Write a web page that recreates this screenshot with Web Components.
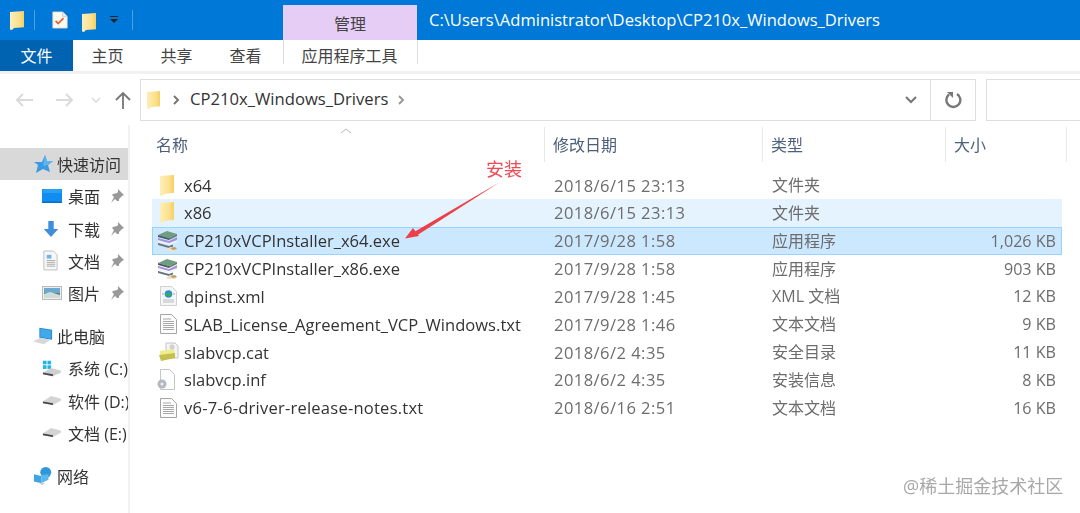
<!DOCTYPE html>
<html lang="zh"><head><meta charset="utf-8"><title>CP210x_Windows_Drivers</title>
<style>
html,body{margin:0;padding:0;background:#fff;overflow:hidden}
body{width:1080px;height:513px;font-family:"Open Sans","Noto Sans CJK SC",sans-serif}
</style></head><body>
<x-explorer>
  <x-titlebar slot="title" path="C:\Users\Administrator\Desktop\CP210x_Windows_Drivers"></x-titlebar>
  <x-ribbon slot="ribbon"></x-ribbon>
  <x-address slot="address" folder="CP210x_Windows_Drivers"></x-address>
  <x-nav slot="nav">
    <x-nav-item icon="star" level="0" selected>快速访问</x-nav-item>
    <x-nav-item icon="desktop" level="1" pin>桌面</x-nav-item>
    <x-nav-item icon="down" level="1" pin>下载</x-nav-item>
    <x-nav-item icon="docs" level="1" pin>文档</x-nav-item>
    <x-nav-item icon="pics" level="1" pin>图片</x-nav-item>
    <x-nav-item icon="pc" level="0" gap="10.8">此电脑</x-nav-item>
    <x-nav-item icon="sysdrive" level="1">系统 (C:)</x-nav-item>
    <x-nav-item icon="drive" level="1">软件 (D:)</x-nav-item>
    <x-nav-item icon="drive" level="1">文档 (E:)</x-nav-item>
    <x-nav-item icon="net" level="0" gap="10.8">网络</x-nav-item>
  </x-nav>
  <x-files slot="files">
    <x-file icon="folder" date="2018/6/15 23:13" type="文件夹">x64</x-file>
    <x-file icon="folder" date="2018/6/15 23:13" type="文件夹" state="hover">x86</x-file>
    <x-file icon="exe" date="2017/9/28 1:58" type="应用程序" size="1,026 KB" state="selected">CP210xVCPInstaller_x64.exe</x-file>
    <x-file icon="exe" date="2017/9/28 1:58" type="应用程序" size="903 KB">CP210xVCPInstaller_x86.exe</x-file>
    <x-file icon="xml" date="2017/9/28 1:45" type="XML 文档" size="12 KB">dpinst.xml</x-file>
    <x-file icon="txt" date="2017/9/28 1:46" type="文本文档" size="9 KB" ls=".03">SLAB_License_Agreement_VCP_Windows.txt</x-file>
    <x-file icon="cat" date="2018/6/2 4:35" type="安全目录" size="11 KB">slabvcp.cat</x-file>
    <x-file icon="inf" date="2018/6/2 4:35" type="安装信息" size="8 KB">slabvcp.inf</x-file>
    <x-file icon="txt" date="2018/6/16 2:51" type="文本文档" size="16 KB" ls=".23">v6-7-6-driver-release-notes.txt</x-file>
  </x-files>
  <x-callout slot="overlay"></x-callout>
</x-explorer>
<script>
const ICONS={
folder:'<svg viewBox="0 0 14 20" preserveAspectRatio="none"><defs><linearGradient id="f" x1="0" x2="1" y1="0" y2="0"><stop offset="0" stop-color="#fdeeb8"/><stop offset=".65" stop-color="#fbe08e"/><stop offset="1" stop-color="#f4cf63"/></linearGradient></defs><path d="M0 1l14-1v17L4 18l-2 2-2-.500z" fill="url(#f)"/></svg>',
doc:'<svg viewBox="0 0 18 20"><path d="M1 1h11l5 5v13H1z" fill="#fdfaf2" stroke="#e2dccb"/><path d="M12 1v5h5" fill="#eee" stroke="#ccc"/><path d="M4 11l3 3 6-6" fill="none" stroke="#e0672e" stroke-width="2"/></svg>',
star:'<svg viewBox="0 0 20 20"><path d="M12 1l2 6h6l-5 4 2 7-7-3-7 4 2-8-4-3h8z" fill="#3b9ae1"/><path d="M12 1l2 6h6l-5 4-5 1z" fill="#5cb4f0"/></svg>',
desktop:'<svg viewBox="0 0 20 16"><rect x="0" y="1" width="20" height="14" fill="#0f8df0"/><rect x="0" y="13.500" width="20" height="1.500" fill="#0a6fc4"/><rect x="1" y="1" width="18" height="4" fill="#2a9ff5"/></svg>',
down:'<svg viewBox="0 0 20 20"><path d="M7 1h6v9h5l-8 9-8-9h5z" fill="#3d8fdc"/></svg>',
docs:'<svg viewBox="0 0 18 22"><path d="M2 1h10l4 4v16H2z" fill="#f7f7f7" stroke="#bdbdbd"/><path d="M5 5h5v4H5z" fill="#6fb6e6"/><path d="M5 11h9M5 13h9M5 15h9M5 17h9" stroke="#a9a9a9"/></svg>',
pics:'<svg viewBox="0 0 20 16"><rect x=".5" y="1.500" width="19" height="13" fill="#eee" stroke="#bbb"/><rect x="2" y="3" width="16" height="5" fill="#6ca8cf"/><rect x="2" y="8" width="16" height="5" fill="#56806e"/><path d="M2 9l6-2 10 3v3H2z" fill="#cfdcd8"/></svg>',
pin:'<svg viewBox="0 0 14 14"><path d="M8 0l6 6-2 1-3 3 0 2-2 0-2-2-4 4 3-6-2-2 1-1 4-1 1-1z" fill="#999"/></svg>',
pc:'<svg viewBox="0 0 22 20"><path d="M7 1l14 2v11l-14-2z" fill="#2288d4"/><path d="M8 2l12 2v9l-12-2z" fill="#41a9ea"/><path d="M0 16l8-4 11 2-7 5z" fill="#d8d8d8"/></svg>',
sysdrive:'<svg viewBox="0 0 22 20"><rect x="1" y="2" width="4" height="4" fill="#22b5e8"/><rect x="6" y="2" width="4" height="4" fill="#22b5e8"/><rect x="1" y="7" width="4" height="4" fill="#22b5e8"/><rect x="6" y="7" width="4" height="4" fill="#22b5e8"/><path d="M1 15l9-5 11 3v2l-9 4-11-2z" fill="#cfcfcf"/><path d="M1 15l11 2v2l-11-2z" fill="#4c4c4c"/></svg>',
drive:'<svg viewBox="0 0 22 14"><path d="M1 8l9-6 11 3v2l-9 5-11-2z" fill="#d4d4d4"/><path d="M1 8l11 2v2l-11-2z" fill="#454545"/></svg>',
net:'<svg viewBox="0 0 22 22"><circle cx="14" cy="7" r="6" fill="#2f97d9"/><path d="M1 9l8 2v8l-8-2z" fill="#3da5e6"/><path d="M9 10l8-1v6l-8 4z" fill="#5bb8ee"/><path d="M5 18l8 1-3 2z" fill="#c9c9c9"/></svg>',
exe:'<svg viewBox="0 0 22 21"><path d="M1 5l9-4 10 3-8 4z" fill="#6f9c82"/><path d="M1 5l11 3v2L1 7z" fill="#4a5a6a"/><path d="M12 8l8-4v2l-8 4z" fill="#5a8068"/><path d="M1 8l11 3 8-4v3l-8 3L1 10z" fill="#a493dc"/><path d="M1 10.500l11 3 8-3v1.500l-8 3-11-3z" fill="#f4f3f8"/><path d="M1 13l11 3 4-1.500v2L12 18 1 15z" fill="#6a747e"/><path d="M9 20l4-3 7 2-2 2-7 0z" fill="#efe2c4"/><path d="M13 18l5-1 2 2-4 1z" fill="#b89d68"/></svg>',
xml:'<svg viewBox="0 0 17 20"><path d="M.5.5h11l5 5v14H.5z" fill="#f4f6f8" stroke="#d0d0d0"/><path d="M3 14h11M3 16h11" stroke="#bbb"/><circle cx="8.500" cy="8" r="3.800" fill="#2d8fcf"/><path d="M5.500 9l3-3 3 3-3 2z" fill="#3caa55"/><path d="M2 8h2M13 8h2" stroke="#aaa"/></svg>',
txt:'<svg viewBox="0 0 17 20"><path d="M.5.5h11l5 5v14H.5z" fill="#fcfcfc" stroke="#a5a5a5"/><path d="M3 5h8M3 7.500h11M3 9.500h11M3 11.500h11M3 13.500h11M3 15.500h11" stroke="#a8a8a8"/></svg>',
cat:'<svg viewBox="0 0 20 20"><path d="M7 1h9l3 3v12H7z" fill="#f4f4f4" stroke="#c4c4c4"/><path d="M1 9l14-2 1 5-15 3z" fill="#f0ec90"/><path d="M0 13l16-2v5L2 19z" fill="#c5bf4e"/><circle cx="13" cy="5" r="2.500" fill="#cfcfcf"/></svg>',
inf:'<svg viewBox="0 0 18 21"><path d="M3.500.5h9l5 5v15h-14z" fill="#fdfdfd" stroke="#c4c4c4"/><circle cx="5" cy="15" r="4.500" fill="#b4b9bd"/><circle cx="5" cy="15" r="1.500" fill="#eef"/></svg>'
};
class Base extends HTMLElement{
  constructor(){super();this.attachShadow({mode:'open'});}
  html(s){this.shadowRoot.innerHTML=s;}
}
class XIcon extends Base{
  connectedCallback(){
    const w=this.getAttribute('w')||20,h=this.getAttribute('h')||20;
    this.html(`<style>:host{display:inline-flex;width:${w}px;height:${h}px;flex:none}svg{width:100%;height:100%;display:block}</style>${ICONS[this.getAttribute('name')]||''}`);
  }
}
class XExplorer extends Base{
  connectedCallback(){this.html(`<style>
  :host{display:grid;position:relative;width:1080px;height:513px;overflow:hidden;grid-template-rows:40px 31px 54px 1fr;grid-template-columns:131px 1fr;filter:blur(.35px)}
  ::slotted([slot=title]),::slotted([slot=ribbon]),::slotted([slot=address]){grid-column:1/3}
  </style><slot name="title"></slot><slot name="ribbon"></slot><slot name="address"></slot><slot name="nav"></slot><slot name="files"></slot><slot name="overlay"></slot>`);}
}
class XTitlebar extends Base{
  connectedCallback(){this.html(`<style>
  :host{display:flex;align-items:flex-end;height:40px;background:#0078d7;color:#fff}
  .qa{display:flex;align-items:center;height:40px;width:283px;flex:none;box-sizing:border-box;padding:0 0 0 10px}
  .sep{width:1px;height:20px;background:#4d9fe0;flex:none}
  .drop{width:0;height:0;border:4px solid transparent;border-top:4px solid #222;border-bottom:0;position:relative;margin:2px 0 0 0;flex:none}
  .drop:before{content:"";position:absolute;left:-4px;top:-7px;width:8px;height:1px;background:#222}
  .manage{width:134px;height:35px;background:#e5cdf6;color:#444;display:flex;align-items:center;justify-content:center;font-size:16px;flex:none}
  .path{margin-left:12px;height:40px;padding-bottom:2px;box-sizing:border-box;display:flex;align-items:center;font-size:16.56px;white-space:nowrap}
  </style><div class="qa"><x-icon name="folder" w="14" h="19"></x-icon><span class="sep" style="margin-left:10px"></span>
  <x-icon name="doc" w="16" h="20" style="margin-left:17px"></x-icon><x-icon name="folder" w="14" h="19" style="margin-left:14px;margin-top:4px"></x-icon>
  <span class="drop" style="margin-left:14px"></span><span class="sep" style="margin-left:14px"></span></div>
  <div class="manage">管理</div><div class="path">${this.getAttribute('path')}</div>`);}
}
class XRibbon extends Base{
  connectedCallback(){this.html(`<style>
  :host{display:flex;height:31px;background:#fff;color:#444;font-size:16px;align-items:stretch}
  div{display:flex;align-items:center;justify-content:center;flex:none;padding-bottom:1px;box-sizing:border-box}
  .file{width:73px;background:#0063b1;color:#fff}
  .t{width:69px}
  .tool{width:135px;margin-left:3px;padding:6px 2px 0 0;border:solid #dcdcdc;border-width:0 1px;align-self:flex-start;height:24px}
  </style><div class="file">文件</div><div class="t">主页</div><div class="t">共享</div><div class="t">查看</div><div class="tool">应用程序工具</div>`);}
}
class XAddress extends Base{
  connectedCallback(){this.html(`<style>
  :host{display:flex;box-sizing:border-box;height:54px;background:#fff;border-top:3px solid #f1f1f1;padding:5px 0 4px 0;color:#333;align-items:stretch}
  .nav{width:140px;flex:none;display:flex;align-items:center;box-sizing:border-box;padding-left:15px}
  .nav svg{display:block;flex:none}
  .box{width:836px;flex:none;box-sizing:border-box;border:1px solid #dedede;display:flex;align-items:center;padding-left:6px;font-size:16.64px;color:#333}
  .chev{flex:none}
  .name{margin-left:10px;white-space:nowrap;position:relative;top:-1.5px}
  .sp{flex:1}
  .refresh{width:44px;height:100%;border-left:1px solid #dedede;display:flex;align-items:center;justify-content:center;flex:none}
  .search{width:95px;flex:none;margin-left:10px;box-sizing:border-box;border:1px solid #dedede;border-right:0}
  </style>
  <div class="nav">
   <svg width="19" height="16" viewBox="0 0 19 16"><path d="M18 8H2M8 2L2 8l6 6" fill="none" stroke="#dadada" stroke-width="2"/></svg>
   <svg width="19" height="16" viewBox="0 0 19 16" style="margin-left:21px"><path d="M1 8h16M11 2l6 6-6 6" fill="none" stroke="#dadada" stroke-width="2"/></svg>
   <svg width="10" height="8" viewBox="0 0 10 8" style="margin-left:17px"><path d="M1 2l4 4 4-4" fill="none" stroke="#dadada" stroke-width="1.500"/></svg>
   <svg width="16" height="18" viewBox="0 0 16 18" style="margin-left:14px"><path d="M8 18V2M1 9l7-7 7 7" fill="none" stroke="#777" stroke-width="1.800"/></svg>
  </div>
  <div class="box"><x-icon name="folder" w="13" h="18"></x-icon>
   <svg class="chev" width="8" height="12" viewBox="0 0 8 12" style="margin-left:12px"><path d="M2 2l4 4-4 4" fill="none" stroke="#777" stroke-width="2"/></svg>
   <span class="name">${this.getAttribute('folder')}</span>
   <svg class="chev" width="8" height="12" viewBox="0 0 8 12" style="margin-left:9px"><path d="M2 2l4 4-4 4" fill="none" stroke="#999" stroke-width="2"/></svg>
   <span class="sp"></span>
   <svg class="chev" width="14" height="10" viewBox="0 0 14 10" style="margin-right:12px"><path d="M2 2l5 5 5-5" fill="none" stroke="#777" stroke-width="2"/></svg>
   <div class="refresh"><svg width="18" height="18" viewBox="0 0 18 18"><path d="M5 3.500A7 7 0 1 0 13 3" fill="none" stroke="#777" stroke-width="2.400"/><path d="M3 1h6v6z" fill="#777"/></svg></div>
  </div>
  <div class="search"></div>`);}
}
class XNav extends Base{
  connectedCallback(){this.html(`<style>
  :host{display:block;width:130px;box-sizing:border-box;border-right:2px solid #f3f3f3;padding-top:23px;overflow:hidden;height:388px}
  </style><slot></slot>`);}
}
class XNavItem extends Base{
  connectedCallback(){
    const lvl=+this.getAttribute('level'),sel=this.hasAttribute('selected'),pin=this.hasAttribute('pin'),gap=+(this.getAttribute('gap')||0);
    const n=this.getAttribute('icon');
    const size={desktop:[20,16],pics:[20,16],down:[18,18],docs:[17,21],drive:[20,13]}[n]||[20,20];
    const left=lvl?42:33;
    this.html(`<style>
    :host{display:flex;align-items:center;width:128px;height:32.25px;margin-top:${gap}px;box-sizing:border-box;padding-left:${left}px;font-size:16px;color:#333;white-space:nowrap;overflow:hidden;background:${sel?'#d9d9d9':'transparent'}}
    .ic{width:${lvl?26:24}px;display:flex;align-items:center;flex:none}
    .pin{margin-left:10px;flex:none}
    </style><span class="ic"><x-icon name="${n}" w="${size[0]}" h="${size[1]}"></x-icon></span><span><slot></slot></span>${pin?'<x-icon class="pin" name="pin" w="14" h="14"></x-icon>':''}`);
  }
}
class XFiles extends Base{
  connectedCallback(){this.html(`<style>
  :host{display:block;padding-top:2px;position:relative}
  .hd{display:grid;grid-template-columns:414px 218px 183px 121px;height:35px;color:#4c607a;font-size:16px}
  .hd div{border-right:1px solid #e8e8e8;box-sizing:border-box;display:flex;align-items:center;padding:0 0 2px 8px;position:relative}
  .hd div:first-child{padding-left:25px}
  .caret{position:absolute;left:208px;top:0}
  .rows{padding:9px 0 0 21px}
  </style><div class="hd"><div>名称<svg class="caret" width="14" height="7" viewBox="0 0 14 7"><path d="M2 6l5-4 5 4" fill="none" stroke="#b5b5b5"/></svg></div><div>修改日期</div><div>类型</div><div>大小</div></div>
  <div class="rows"><slot></slot></div>`);}
}
const FILE_ICON={folder:[7,14,21],exe:[4,22,21],xml:[7,17,20],txt:[7,17,20],cat:[6,20,20],inf:[4,18,21]};
class XFile extends Base{
  connectedCallback(){
    const g=k=>this.getAttribute(k)||'';
    const st=g('state');
    const bg=st==='selected'?'background:#cce8ff;border:1px solid #99d1ff;':st==='hover'?'background:#e5f3ff;border:1px solid #e5f3ff;':'border:1px solid transparent;';
    const n=g('icon');
    const s=FILE_ICON[n];
    this.html(`<style>
    :host{display:grid;grid-template-columns:31px 370px 218px 100px 1fr;width:910px;height:27.85px;box-sizing:border-box;${bg}align-items:center;font-size:16.55px;color:#333;white-space:nowrap}
    .ic{display:flex;padding-left:${s[0]}px}
    .n{letter-spacing:${g('ls')||0}px}
    .d{color:#6d6d6d;letter-spacing:.45px}
    .m{color:#6d6d6d;font-size:16px;padding-bottom:2px}
    .s{color:#6d6d6d;text-align:right;padding-right:5px;font-size:16.1px}
    </style><span class="ic"><x-icon name="${n}" w="${s[1]}" h="${s[2]}"></x-icon></span><span class="n"><slot></slot></span><span class="d">${g('date')}</span><span class="m">${g('type')}</span><span class="s">${g('size')}</span>`);
  }
}
class XCallout extends Base{
  connectedCallback(){this.html(`<style>
  :host{position:absolute;inset:0;pointer-events:none;display:block}
  svg{position:absolute;left:0;top:0}
  .lb{position:absolute;left:486px;top:157px;color:#ee4a55;font-size:18px;line-height:24px}
  .wm{position:absolute;left:903px;top:475px;color:#a8a8a8;font-size:18px;line-height:22px;white-space:nowrap}
  </style><svg width="1080" height="513" viewBox="0 0 1080 513"><path d="M500 182L415 231.500l2.500 3.500z" fill="#ec3f48"/><path d="M405 238.500l8-10.500 6 8z" fill="#ec3f48"/></svg>
  <div class="lb">安装</div><div class="wm">@稀土掘金技术社区</div>`);}
}
customElements.define('x-icon',XIcon);
customElements.define('x-explorer',XExplorer);
customElements.define('x-titlebar',XTitlebar);
customElements.define('x-ribbon',XRibbon);
customElements.define('x-address',XAddress);
customElements.define('x-nav',XNav);
customElements.define('x-nav-item',XNavItem);
customElements.define('x-files',XFiles);
customElements.define('x-file',XFile);
customElements.define('x-callout',XCallout);
</script>
</body></html>
